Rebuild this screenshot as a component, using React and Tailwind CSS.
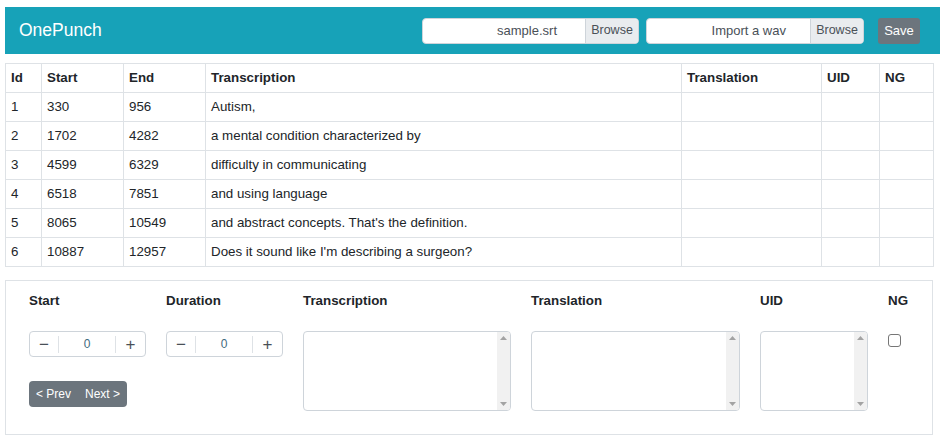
import React from 'react'

const ROWS = [
  { id: 1, start: 330,   end: 956,   text: 'Autism,' },
  { id: 2, start: 1702,  end: 4282,  text: 'a mental condition characterized by' },
  { id: 3, start: 4599,  end: 6329,  text: 'difficulty in communicating' },
  { id: 4, start: 6518,  end: 7851,  text: 'and using language' },
  { id: 5, start: 8065,  end: 10549, text: "and abstract concepts. That's the definition." },
  { id: 6, start: 10887, end: 12957, text: "Does it sound like I'm describing a surgeon?" },
]

const COLS = [
  { label: 'Id',            w: 'w-[36px]' },
  { label: 'Start',         w: 'w-[82px]' },
  { label: 'End',           w: 'w-[82px]' },
  { label: 'Transcription', w: 'w-[476px]' },
  { label: 'Translation',   w: 'w-[140px]' },
  { label: 'UID',           w: 'w-[58px]' },
  { label: 'NG',            w: 'w-[54px]' },
]

function FileInput({ label, width, pr }) {
  return (
    <div className={`flex h-[26px] ${width} rounded-[4px] border border-[#ced4da] bg-white overflow-hidden`}>
      <div className={`flex-1 flex items-center justify-end ${pr} text-[13px] text-[#495057]`}>{label}</div>
      <div className="flex items-center w-[53px] justify-center bg-[#e9ecef] border-l border-[#ced4da] text-[12.5px] text-[#495057]">Browse</div>
    </div>
  )
}

function Spinner() {
  return (
    <div className="flex items-center h-[26px] w-[117px] rounded-[4px] border border-[#ced4da] bg-white">
      <span className="w-[28px] text-center text-[17px] leading-none text-[#495057]">−</span>
      <span className="h-[17px] border-l border-[#dee2e6]" />
      <span className="flex-1 text-center text-[12px] text-[#3f6a7e]">0</span>
      <span className="h-[17px] border-l border-[#dee2e6]" />
      <span className="w-[29px] text-center text-[17px] leading-none text-[#495057]">+</span>
    </div>
  )
}

function Area({ width }) {
  return (
    <div className={`flex h-[80px] ${width} rounded-[4px] border border-[#ced4da] bg-white overflow-hidden`}>
      <textarea className="flex-1 resize-none outline-none p-1 text-[13px]" />
      <div className="w-[13px] bg-[#f1f1f1] flex flex-col items-center justify-between py-[4px]">
        <svg width="7" height="4" viewBox="0 0 7 4"><path d="M0 4 L3.5 0 L7 4 Z" fill="#a3a3a3" /></svg>
        <svg width="7" height="4" viewBox="0 0 7 4"><path d="M0 0 L3.5 4 L7 0 Z" fill="#a3a3a3" /></svg>
      </div>
    </div>
  )
}

function Field({ label, width, children }) {
  return (
    <div className={`${width} shrink-0 flex flex-col`}>
      <div className="h-[20px] leading-[20px] text-[13.33px] font-bold text-[#212529] pt-px">{label}</div>
      <div className="mt-[21px]">{children}</div>
    </div>
  )
}

export default function App() {
  return (
    <div className="min-h-screen bg-white pt-[7px] overflow-hidden" style={{ fontFamily: '"Liberation Sans", Arial, sans-serif' }}>

      {/* header bar */}
      <header className="ml-[5px] h-[47px] bg-[#17a2b8] flex items-center pl-[14px] pr-[20px]">
        <span className="text-[17.5px] text-white">OnePunch</span>
        <div className="ml-auto flex items-center gap-[7px]">
          <FileInput label="sample.srt" width="w-[217px]" pr="pr-[28px]" />
          <FileInput label="Import a wav" width="w-[218px]" pr="pr-[24px]" />
          <button className="h-[26px] w-[42px] ml-[7px] rounded-[3px] bg-[#6c757d] text-white text-[13px]">Save</button>
        </div>
      </header>

      {/* subtitle table */}
      <table className="ml-[5px] mt-[9px] w-[928px] border-collapse text-[13.33px] text-[#212529] table-fixed">
        <thead>
          <tr className="h-[29px]">
            {COLS.map(c => (
              <th key={c.label} className={`${c.w} border border-[#dee2e6] px-[5px] text-left font-bold`}>{c.label}</th>
            ))}
          </tr>
        </thead>
        <tbody>
          {ROWS.map(r => (
            <tr key={r.id} className="h-[29px]">
              <td className="border border-[#dee2e6] px-[5px]">{r.id}</td>
              <td className="border border-[#dee2e6] px-[5px]">{r.start}</td>
              <td className="border border-[#dee2e6] px-[5px]">{r.end}</td>
              <td className="border border-[#dee2e6] px-[5px]">{r.text}</td>
              <td className="border border-[#dee2e6] px-[5px]" />
              <td className="border border-[#dee2e6] px-[5px]" />
              <td className="border border-[#dee2e6] px-[5px]" />
            </tr>
          ))}
        </tbody>
      </table>

      {/* editor panel */}
      <div className="ml-[5px] mt-[13px] w-[928px] h-[155px] border border-[#dee2e6] flex gap-[20px] pl-[23px] pt-[9px]">
        <Field label="Start" width="w-[117px]">
          <Spinner />
          <div className="mt-[24px] inline-flex h-[26px] rounded-[4px] bg-[#6c757d] text-white text-[12px] overflow-hidden">
            <button className="pl-[7px] pr-[7px]">&lt; Prev</button>
            <button className="pl-[7px] pr-[7px]">Next &gt;</button>
          </div>
        </Field>
        <Field label="Duration" width="w-[117px]">
          <Spinner />
        </Field>
        <Field label="Transcription" width="w-[208px]">
          <Area width="w-[208px]" />
        </Field>
        <Field label="Translation" width="w-[209px]">
          <Area width="w-[209px]" />
        </Field>
        <Field label="UID" width="w-[108px]">
          <Area width="w-[108px]" />
        </Field>
        <Field label="NG" width="w-[25px]">
          <div className="mt-[3px] h-[13px] w-[13px] rounded-[3px] border border-[#767676] bg-white" />
        </Field>
      </div>
    </div>
  )
}
